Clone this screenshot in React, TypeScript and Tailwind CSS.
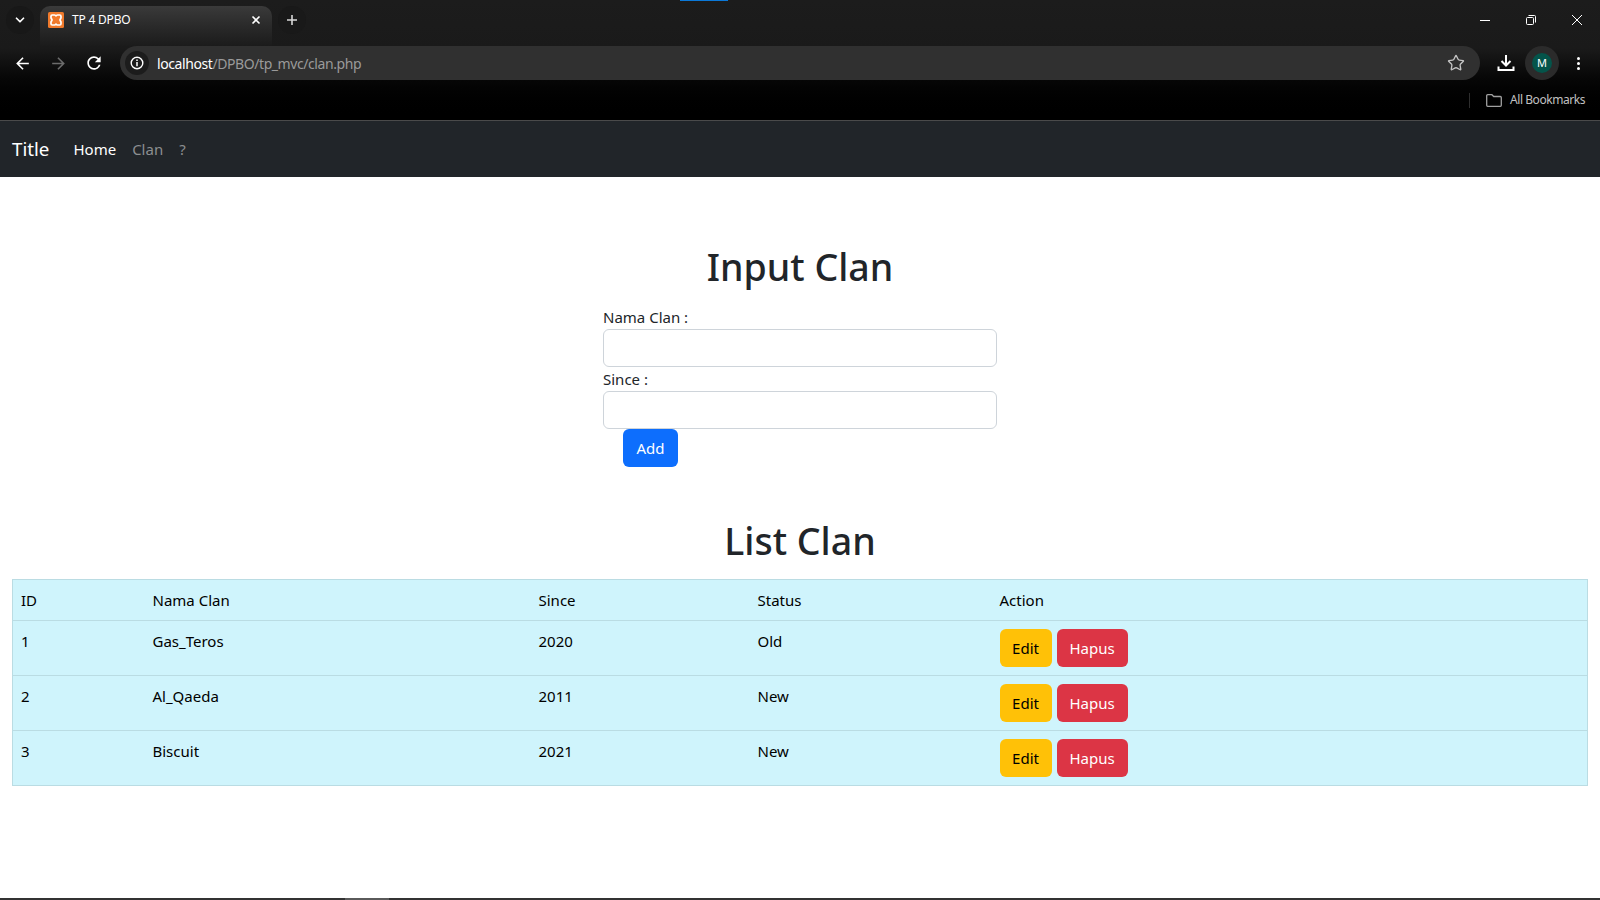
import { ChevronDown, Star } from 'lucide-react';

const clans = [
  { id: 1, nama: 'Gas_Teros', since: 2020, status: 'Old' },
  { id: 2, nama: 'Al_Qaeda', since: 2011, status: 'New' },
  { id: 3, nama: 'Biscuit', since: 2021, status: 'New' },
];

const XamppIcon = () => (
  <svg width="16" height="16" viewBox="0 0 16 16" className="shrink-0">
    <rect width="16" height="16" rx="1.500" fill="#f07a2c" />
    <path
      d="M4.200 3h2.300c.9 0 1 .9 1.500.9s.6-.9 1.500-.9h2.300c.7 0 1.200.5 1.200 1.200v1.600c0 1-1 1.200-1 2.200s1 1.200 1 2.200v1.600c0 .7-.5 1.200-1.200 1.200H9.500c-.9 0-1-.9-1.500-.9s-.6.9-1.500.9H4.200C3.500 13 3 12.500 3 11.800v-1.600c0-1 1-1.200 1-2.200s-1-1.200-1-2.200V4.200C3 3.500 3.500 3 4.200 3z"
      fill="none"
      stroke="#fff"
      strokeWidth="1.700"
    />
  </svg>
);

const BrowserChrome = () => (
  <div className="relative bg-gradient-to-b from-[#1c1c1c] via-[#1a1a1a] via-40% to-black text-white">
    <div className="absolute left-[680px] top-0 h-px w-[48px] bg-[#0b78d8]" />
    <div className="flex h-[46px] items-start pt-[6px]">
      <div className="flex h-[28px] w-[40px] items-center justify-center">
        <div className="flex h-[28px] w-[28px] items-center justify-center rounded-full bg-[#181818]">
          <ChevronDown size={14} strokeWidth={3} />
        </div>
      </div>
      <div className="flex h-[40px] w-[232px] items-center gap-[8px] rounded-t-[10px] bg-gradient-to-b from-[#3a3a3a] to-[#1b1b1b] pb-[12px] pl-[8px] pr-[11px]">
        <XamppIcon />
        <span className="flex-1 text-[12px] tracking-[-0.2px]">TP 4 DPBO</span>
        <svg width="10" height="10" viewBox="0 0 10 10" stroke="#fff" strokeWidth="1.600">
          <path d="M1.500 1.500l7 7M8.500 1.500l-7 7" />
        </svg>
      </div>
      <div className="flex h-[28px] w-[40px] items-center justify-center">
        <div className="flex h-[28px] w-[28px] items-center justify-center rounded-full bg-[#191919]">
          <svg width="10" height="10" viewBox="0 0 10 10" stroke="#d8d8d8" strokeWidth="1.600">
            <path d="M5 0v10M0 5h10" />
          </svg>
        </div>
      </div>
      <div className="flex-1" />
      <div className="flex h-[28px] w-[120px] items-center justify-between pr-[18px]">
        <svg width="10" height="10" viewBox="0 0 10 10" stroke="#fff">
          <path d="M0 5.500h10" />
        </svg>
        <svg width="10" height="10" viewBox="0 0 10 10" fill="none" stroke="#fff">
          <rect x="0.500" y="2.500" width="7" height="7" rx="1" />
          <path d="M2.500 .5h6a1 1 0 0 1 1 1v6" />
        </svg>
        <svg width="10" height="10" viewBox="0 0 10 10" stroke="#fff">
          <path d="M0 0l10 10M10 0L0 10" />
        </svg>
      </div>
    </div>
    <div className="flex h-[34px] items-center pl-[4px]">
      <div className="flex w-[36px] justify-center">
        <svg width="19" height="19" viewBox="0 0 24 24" fill="#fff">
          <path d="M20 11H7.830l5.590-5.590L12 4l-8 8 8 8 1.410-1.410L7.830 13H20v-2z" />
        </svg>
      </div>
      <div className="flex w-[36px] justify-center">
        <svg width="19" height="19" viewBox="0 0 24 24" fill="#6b6b6b">
          <path d="M4 11h12.170l-5.590-5.590L12 4l8 8-8 8-1.410-1.410L16.170 13H4v-2z" />
        </svg>
      </div>
      <div className="flex w-[36px] justify-center">
        <svg width="20" height="20" viewBox="0 0 24 24" fill="#fff">
          <path d="M17.650 6.350A7.958 7.958 0 0 0 12 4c-4.420 0-7.990 3.580-7.990 8s3.570 8 7.990 8c3.730 0 6.840-2.550 7.730-6h-2.080A5.990 5.990 0 0 1 12 18c-3.310 0-6-2.690-6-6s2.690-6 6-6c1.660 0 3.140.69 4.220 1.780L13 11h7V4l-2.350 2.350z" />
        </svg>
      </div>
      <div className="ml-[8px] flex h-[34px] w-[1360px] items-center rounded-full bg-[#303030] pl-[5px] pr-[15px]">
        <div className="mr-[8px] flex h-[24px] w-[24px] items-center justify-center rounded-full bg-[#1c1c1c]">
          <svg width="14" height="14" viewBox="0 0 14 14" fill="none" stroke="#fff">
            <circle cx="7" cy="7" r="5.800" strokeWidth="1.400" />
            <path d="M7 6v4.200M7 3.500v1.400" strokeWidth="1.500" />
          </svg>
        </div>
        <span className="flex-1 text-[14px] tracking-[-0.42px] text-[#9a9a9a]">
          <span className="text-white">localhost</span>/DPBO/tp_mvc/clan.php
        </span>
        <Star size={18} strokeWidth={1.800} className="text-[#c4c4c4]" />
      </div>
      <svg width="18" height="18" viewBox="0 0 18 18" className="ml-[17px]" fill="none" stroke="#fff" strokeWidth="2">
        <path d="M9 1v10M4.500 7l4.500 4.500L13.500 7M1.500 12.500v3.500h15v-3.500" />
      </svg>
      <div className="ml-[10px] flex h-[34px] w-[34px] items-center justify-center rounded-full bg-[#2b2b2b]">
        <div className="flex h-[20px] w-[20px] items-center justify-center rounded-full bg-[#04544a] text-[11px] text-white">
          M
        </div>
      </div>
      <div className="ml-[11px] flex w-[16px] flex-col items-center gap-[2px]">
        <span className="h-[3px] w-[3px] rounded-full bg-white" />
        <span className="h-[3px] w-[3px] rounded-full bg-white" />
        <span className="h-[3px] w-[3px] rounded-full bg-white" />
      </div>
    </div>
    <div className="flex h-[40px] items-center justify-end pr-[15px]">
      <div className="mr-[16px] h-[15px] w-px bg-[#2e2e2e]" />
      <svg width="16" height="13" viewBox="0 0 16 13" fill="none" stroke="#a0a0a0" strokeWidth="1.300" className="mr-[8px]">
        <path d="M1.700.7h4.200l1.800 1.800h6.600a1 1 0 0 1 1 1v7.800a1 1 0 0 1-1 1H1.700a1 1 0 0 1-1-1V1.700a1 1 0 0 1 1-1z" />
      </svg>
      <span className="text-[12px] tracking-[-0.45px] text-[#c0c0c0]">All Bookmarks</span>
    </div>
    <div className="h-px bg-[#4a4a4a]" />
  </div>
);

const Navbar = () => (
  <nav className="flex h-[56px] items-center bg-[#212529] pl-[12px]">
    <span className="mr-[24px] text-[18.750px] text-white">Title</span>
    <span className="text-[15px] text-white">Home</span>
    <span className="ml-[16px] text-[15px] text-[#8c8e90]">Clan</span>
    <span className="ml-[16px] text-[15px] text-[#8c8e90]">?</span>
  </nav>
);

const Field = ({ label }: { label: string }) => (
  <div>
    <label className="block h-[24px] text-[15px] leading-[24px]">{label}</label>
    <input type="text" className="block h-[38px] w-full rounded-[6px] border border-[#ced4da] bg-white" />
  </div>
);

const Btn = ({ label, className }: { label: string; className: string }) => (
  <button type="button" className={`h-[38px] rounded-[6px] text-[15px] ${className}`}>
    {label}
  </button>
);

export default function App() {
  return (
    <div className="flex h-screen flex-col overflow-hidden bg-white font-['Noto_Sans','Open_Sans',sans-serif] text-[#212529]">
      <BrowserChrome />
      <Navbar />
      <main className="flex-1">
        <h1 className="mt-[66px] text-center text-[37.500px] font-medium leading-[48px]">Input Clan</h1>
        <form className="mx-auto mt-[14px] w-[394px]">
          <Field label="Nama Clan :" />
          <Field label="Since :" />
          <Btn label="Add" className="ml-[20px] w-[55px] bg-[#0d6efd] text-white" />
        </form>
        <h1 className="mb-[14px] mt-[50px] text-center text-[37.500px] font-medium leading-[48px]">List Clan</h1>
        <div className="px-[12px]">
          <table className="w-full table-fixed border border-[#badce3] bg-[#cff4fc] text-[15px] leading-[24px] text-black">
            <colgroup>
              <col className="w-[132px]" />
              <col className="w-[386px]" />
              <col className="w-[219px]" />
              <col className="w-[242px]" />
              <col />
            </colgroup>
            <thead>
              <tr className="border-b border-[#badce3]">
                <td className="p-[8px]">ID</td>
                <td className="p-[8px]">Nama Clan</td>
                <td className="p-[8px]">Since</td>
                <td className="p-[8px]">Status</td>
                <td className="p-[8px]">Action</td>
              </tr>
            </thead>
            <tbody>
              {clans.map((clan) => (
                <tr key={clan.id} className="border-b border-[#badce3] align-top">
                  <td className="p-[8px]">{clan.id}</td>
                  <td className="p-[8px]">{clan.nama}</td>
                  <td className="p-[8px]">{clan.since}</td>
                  <td className="p-[8px]">{clan.status}</td>
                  <td className="p-[8px]">
                    <div className="flex gap-[5px]">
                      <Btn label="Edit" className="w-[52px] bg-[#ffc107] text-black" />
                      <Btn label="Hapus" className="w-[71px] bg-[#dc3545] text-white" />
                    </div>
                  </td>
                </tr>
              ))}
            </tbody>
          </table>
        </div>
      </main>
      <div className="flex h-[2px] bg-[#333333]">
        <div className="ml-[345px] w-[44px] bg-[#5a5a5a]" />
      </div>
    </div>
  );
}
